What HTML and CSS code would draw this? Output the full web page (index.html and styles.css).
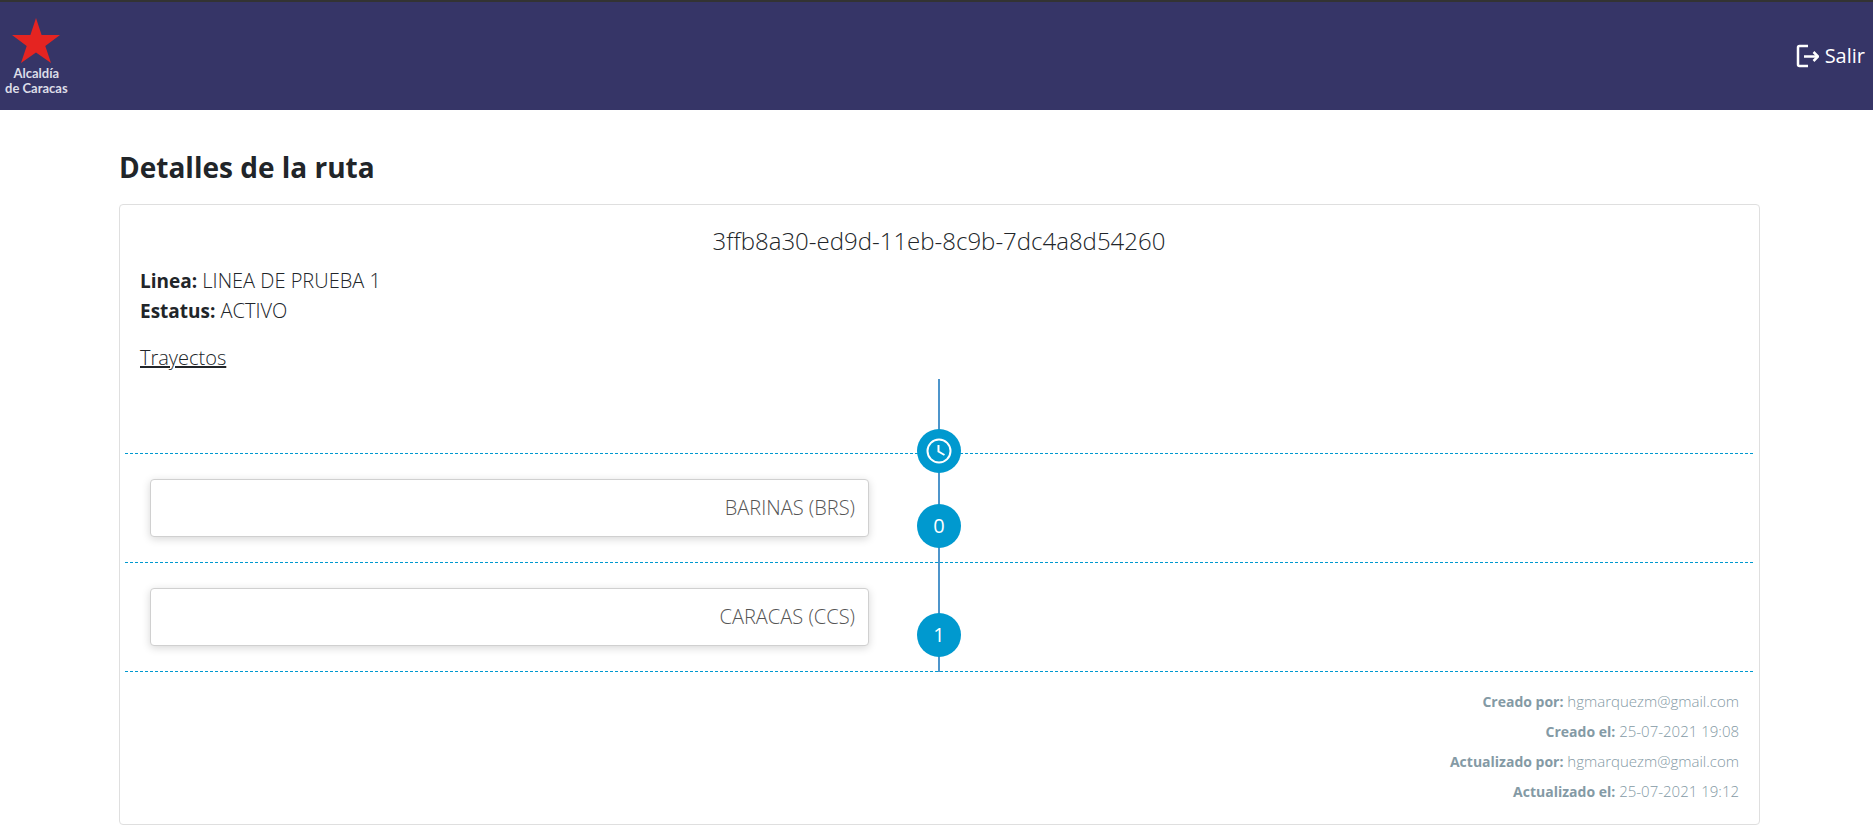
FILE: index.html
```html
<!DOCTYPE html>
<html lang="es">
<head>
<meta charset="utf-8">
<meta name="viewport" content="width=device-width, initial-scale=1">
<title>Detalles de la ruta</title>
<link rel="stylesheet" href="styles.css">
</head>
<body>
<header class="topbar">
  <a class="brand" href="#">
    <svg class="brand-star" viewBox="0 0 48 46" aria-hidden="true"><path d="M24 0 29.600 17H48L33.300 28 39 45 24 34.500 9 45 14.700 28 0 17H18.400Z"/></svg>
    <span>Alcaldía</span>
    <span>de Caracas</span>
  </a>
  <a class="logout" href="#">
    <svg class="logout-icon" viewBox="0 0 24 24" aria-hidden="true"><path class="frame" d="M13 2H4.500Q3 2 3 3.500V20.500Q3 22 4.500 22H13"/><path class="arrow" d="M9 12.500H22"/><path class="arrow" d="M18.500 8 23 12.500 18.500 17"/></svg>
    <span>Salir</span>
  </a>
</header>
<main class="page">
  <h1 class="title">Detalles de la ruta</h1>
  <section class="card">
    <h2 class="route-id">3ffb8a30-ed9d-11eb-8c9b-7dc4a8d54260</h2>
    <p class="detail"><strong>Linea:</strong> LINEA DE PRUEBA 1</p>
    <p class="detail"><strong>Estatus:</strong> ACTIVO</p>
    <h3 class="subtitle">Trayectos</h3>
    <ol class="timeline">
      <li class="start">
        <span class="marker"><svg class="clock" viewBox="0 0 26 26" aria-hidden="true"><circle cx="13" cy="13" r="11.500"/><path d="M12.500 7V13.500L18.500 17"/></svg></span>
      </li>
      <li class="stop">
        <div class="stop-card">BARINAS (BRS)</div>
        <span class="marker">0</span>
      </li>
      <li class="stop">
        <div class="stop-card">CARACAS (CCS)</div>
        <span class="marker">1</span>
      </li>
    </ol>
    <footer class="audit">
      <p><strong>Creado por:</strong> hgmarquezm@gmail.com</p>
      <p><strong>Creado el:</strong> 25-07-2021 19:08</p>
      <p><strong>Actualizado por:</strong> hgmarquezm@gmail.com</p>
      <p><strong>Actualizado el:</strong> 25-07-2021 19:12</p>
    </footer>
  </section>
</main>
</body>
</html>
```
FILE: styles.css
```css
* {
  box-sizing: border-box;
}

body {
  margin: 0;
  background: #fff;
  color: #212529;
  font: 300 20px/30px "Open Sans", "Noto Sans", sans-serif;
}

h1, h2, h3, p, ol {
  margin: 0;
  padding: 0;
  font-weight: 300;
}

strong {
  font-weight: 700;
  line-height: 1;
}

.topbar {
  display: flex;
  align-items: center;
  justify-content: space-between;
  padding: 16px 8px 14px 5px;
  border-top: 2px solid #333;
  background: #363567;
}

.brand {
  display: flex;
  flex-direction: column;
  align-items: center;
  color: #dddde8;
  font: 700 13px/15px Lato, sans-serif;
  text-decoration: none;
}

.brand-star {
  width: 48px;
  height: 46px;
  margin-bottom: 2px;
  fill: #e52421;
}

.logout {
  display: flex;
  align-items: center;
  gap: 6px;
  padding-bottom: 2px;
  color: #fff;
  font-weight: 400;
  text-decoration: none;
}

.logout-icon {
  width: 24px;
  height: 24px;
  fill: none;
  stroke: #fff;
  stroke-width: 2.5;
}

.page {
  padding: 37px 113px 4px 119px;
}

.title {
  margin-bottom: 17px;
  font-size: 28px;
  font-weight: 700;
  line-height: 40px;
}

.card {
  padding: 19px 6px 18px 5px;
  border: 1px solid #dfdfdf;
  border-radius: 4px;
}

.route-id {
  margin-bottom: 8px;
  font-size: 24px;
  line-height: 34px;
  text-align: center;
}

.detail,
.subtitle {
  padding-left: 15px;
}

.detail strong {
  font-size: 19px;
}

.subtitle {
  margin: 17px 0 6px;
  font-size: 20px;
  text-decoration: underline;
}

.timeline {
  list-style: none;
  background: linear-gradient(#4d95cb, #4d95cb) center / 2px 100% no-repeat;
}

.start,
.stop {
  display: grid;
  grid-template-columns: 1fr 44px 1fr;
  border-bottom: 1px dashed #0099cf;
}

.start {
  height: 75px;
  padding-top: 50px;
}

.stop {
  padding: 25px 0;
}

.marker {
  grid-column: 2;
  position: relative;
  display: flex;
  align-items: center;
  justify-content: center;
  width: 44px;
  height: 44px;
  border-radius: 50%;
  background: #0099cf;
  color: #fff;
  font-weight: 400;
}

.stop .marker {
  margin-top: 25px;
  margin-bottom: -12px;
}

.clock {
  width: 26px;
  height: 26px;
  fill: none;
  stroke: #fff;
  stroke-width: 2;
}

.stop-card {
  margin: 0 48px 0 25px;
  padding: 13px;
  border: 1px solid #d0d0d0;
  border-radius: 4px;
  background: #fff;
  box-shadow: 0 2px 8px rgba(0, 0, 0, 0.16);
  color: #555;
  text-align: right;
}

.audit {
  padding: 14px 14px 0 0;
  color: #849aa5;
  font-size: 15px;
  text-align: right;
}

.audit strong {
  font-size: 14px;
}
```
